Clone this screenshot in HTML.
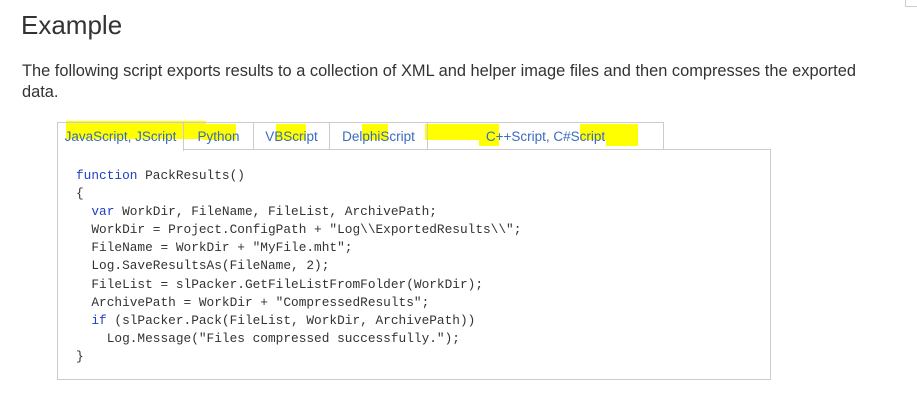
<!DOCTYPE html>
<html><head><meta charset="utf-8"><style>
body{margin:0;width:917px;height:416px;background:#fff;position:relative;overflow:hidden;font-family:"Liberation Sans",sans-serif;color:#333}
h2{position:absolute;left:21px;top:10px;margin:0;font-weight:normal;font-size:26px;color:#333}
p{position:absolute;left:22px;top:61px;margin:0;font-size:16.4px;line-height:21px;width:850px;color:#333}
.tab{position:absolute;top:122px;height:28px;border:1px solid #ccc;border-bottom:none;box-sizing:border-box;font-size:13.5px;color:#3a6bc0;text-align:center;line-height:28px}
.box{position:absolute;left:57px;top:149px;width:714px;height:231px;border:1px solid #ccc;box-sizing:border-box}
pre{position:absolute;left:76px;top:167px;margin:0;font-family:"Liberation Mono",monospace;font-size:12.8px;line-height:18.1px;color:#333}
.k{color:#1f3fc4}
.hl{position:absolute;background:#ffff00;height:16px}
</style></head><body>
<div style="position:absolute;left:905px;top:0;width:12px;height:6px;border-left:1px solid #ccc;border-bottom:1px solid #ccc"></div>
<h2>Example</h2>
<p>The following script exports results to a collection of XML and helper image files and then compresses the exported data.</p>
<div class="box"></div>
<div class="hl" style="left:66px;top:121px;width:140px;height:18px"></div>
<div class="hl" style="left:203px;top:124px;width:33px"></div>
<div class="hl" style="left:276px;top:124px;width:30px"></div>
<div class="hl" style="left:362px;top:124px;width:26px"></div>
<div class="hl" style="left:425px;top:124px;width:74px"></div>
<div class="hl" style="left:479px;top:124px;width:20px;height:22px"></div>
<div class="hl" style="left:580px;top:124px;width:38px"></div>
<div class="hl" style="left:606px;top:124px;width:32px;height:22px"></div>
<div class="tab" style="left:57px;width:127px;height:29px">JavaScript, JScript</div>
<div class="tab" style="left:183px;width:71px">Python</div>
<div class="tab" style="left:253px;width:77px">VBScript</div>
<div class="tab" style="left:329px;width:99px">DelphiScript</div>
<div class="tab" style="left:427px;width:237px">C++Script, C#Script</div>
<div style="position:absolute;left:58px;top:149px;width:125px;height:2px;background:#fff"></div>
<pre><span class="k">function</span> PackResults()
{
  <span class="k">var</span> WorkDir, FileName, FileList, ArchivePath;
  WorkDir = Project.ConfigPath + "Log\\ExportedResults\\";
  FileName = WorkDir + "MyFile.mht";
  Log.SaveResultsAs(FileName, 2);
  FileList = slPacker.GetFileListFromFolder(WorkDir);
  ArchivePath = WorkDir + "CompressedResults";
  <span class="k">if</span> (slPacker.Pack(FileList, WorkDir, ArchivePath))
    Log.Message("Files compressed successfully.");
}</pre>
</body></html>
